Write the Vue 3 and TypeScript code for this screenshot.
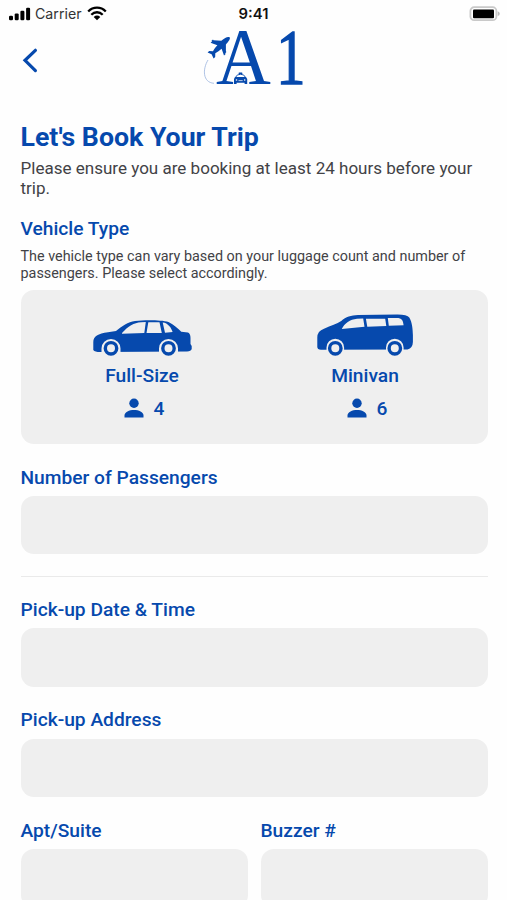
<script setup lang="ts">
interface Vehicle {
  id: 'sedan' | 'minivan'
  name: string
  seats: number
}

const vehicles: Vehicle[] = [
  { id: 'sedan', name: 'Full-Size', seats: 4 },
  { id: 'minivan', name: 'Minivan', seats: 6 },
]
</script>

<template>
  <main class="screen">
    <header class="status">
      <div class="carrier">
        <svg class="signal" width="22" height="14" viewBox="0 0 22 14">
          <rect x="0" y="8.8" width="4" height="4.4" rx="1.2" />
          <rect x="5.7" y="6.4" width="4" height="6.8" rx="1.2" />
          <rect x="11.4" y="3.8" width="4" height="9.4" rx="1.2" />
          <rect x="17.1" y="0.8" width="4" height="12.4" rx="1.2" />
        </svg>
        <span>Carrier</span>
        <svg class="wifi" width="20" height="15" viewBox="0 0 20 15">
          <path d="M1.2 5.5C6.2.4 13.8.4 18.8 5.5" />
          <path d="M4.3 8.7C7.6 5.4 12.4 5.4 15.7 8.7" />
          <path class="solid" d="M6.7 10.9Q10 8.2 13.3 10.9L10 14.3Z" />
        </svg>
      </div>
      <div class="time">9:41</div>
      <svg class="battery" width="32" height="16" viewBox="0 0 32 16">
        <rect x="1.400" y="1.200" width="26" height="13" rx="3.800" fill="#fff" stroke="#c9c9c9" stroke-width="1.8" />
        <rect x="4" y="3.600" width="21" height="8.600" rx="1" fill="#000" />
        <path d="M28.7 5.3Q30.8 6 30.8 7.7T28.7 10.1Z" fill="#bbb" />
      </svg>
    </header>

    <nav class="nav">
      <button class="back" aria-label="Back">
        <svg width="16" height="25" viewBox="0 0 16 25">
          <path d="M13.400 2.300 3 12.300 13.400 22.600" />
        </svg>
      </button>
      <svg class="logo" width="110" height="62" viewBox="200 27 110 62" role="img" aria-label="A1">
        <path d="M209 60C203.500 69 203.500 82.500 215 83.300" fill="none" stroke="#9bb4de" stroke-width="0.8" />
        <text transform="translate(216.900 84) scale(.95 1)" class="mark">A</text>
        <text transform="translate(277.300 82.800) scale(.73 .98)" class="mark digit">1</text>
        <path d="M230.600 37.300C229 36.200 226 37.500 222.300 40.700L214.500 40.200 214 39.500 212.500 40.800 213 41.400 211.600 42.700 218.400 45.300C216.400 47.300 215 49.200 214 51.200L210.200 51 208.600 52.400 212.600 54.200 214.600 58.500 216.200 57 216.300 53.300C218.500 52 220.500 50.500 222.600 48.700L225 55.600 226.500 54.200 226.300 53.200 227.400 52.100 226.900 51.200 226.900 44.500C229.800 41.300 231.700 38.600 230.600 37.300Z" />
        <g>
          <path class="outline" d="M236.500 77.800C237.400 73.200 245.500 73.200 246.600 77.800" />
          <rect x="239.600" y="72.500" width="3.800" height="1.600" rx=".6" />
          <path d="M236 77H247L248.200 79V84H245.600V82.800H237.600V84H235V79Z" />
          <circle cx="237.500" cy="80" r=".8" fill="#fff" />
          <circle cx="245.700" cy="80" r=".8" fill="#fff" />
          <path d="M239.500 80.600H243.700" stroke="#fff" stroke-width=".7" />
        </g>
      </svg>
    </nav>

    <section class="content">
      <h1>Let's Book Your Trip</h1>
      <p class="lead">Please ensure you are booking at least 24 hours before your trip.</p>

      <h2>Vehicle Type</h2>
      <p class="hint">The vehicle type can vary based on your luggage count and number of passengers. Please select accordingly.</p>

      <div class="vehicles">
        <div v-for="v in vehicles" :key="v.id" class="vehicle">
          <svg v-if="v.id === 'sedan'" width="100" height="44" viewBox="92 313 100 44">
            <path d="M93.300 350V342C93.300 336.500 98 333.500 108 332.300L116 331C122 326.300 128 322 135 321 145 319.900 161 320 168.500 321.900 174 324.500 178 328.500 181.300 331.700L188 332.500Q190.500 333.500 190.500 338V344L191.700 346V349Q191 351.300 187 351.400L101 352Q95 352.200 93.300 350Z" />
            <path class="window" d="M122 333C128 326.500 134 322.700 141 322.300L145.800 322.100 144.300 333 122 333.800ZM148.300 322.200H159.500L161.800 332.900H146.500ZM162.700 322.500C168 322.900 171.500 328 172.600 332L165 332.800Z" />
            <path class="arch" d="M101.500 352V348.500A9.500 9.500 0 0 1 120.500 348.500V352ZM159 352V348.500A9.500 9.500 0 0 1 178 348.500V352Z" />
            <circle class="wheel" cx="111" cy="348.300" r="5.700" />
            <circle class="wheel" cx="168.500" cy="348.300" r="5.700" />
          </svg>
          <svg v-else width="100" height="44" viewBox="315 313 100 44">
            <path d="M317.300 347V337.500Q317.300 331 324 328.700C331 325.700 337 323.800 341.200 321 346 317 351 315.400 358 315.100L397 314.600Q407 314.500 409.300 317.500C412.300 322.500 412.700 329 412.900 335V342Q412.800 348 407.500 349.400L321 349.800Q317.300 349.500 317.300 347Z" />
            <path class="window" d="M341.800 329C344.500 323.300 350 319.300 357 318.700L363.200 318.400 364.500 326.800ZM365.900 318.700H385.200L386.300 326 367.300 326.700ZM387.800 318H398.500Q403.200 318.500 403.600 325.300L388.800 325.800Z" />
            <path class="arch" d="M326.500 350V347.500A8.800 8.800 0 0 1 344.100 347.500V350ZM386 350V347.500A8.800 8.800 0 0 1 403.600 347.500V350Z" />
            <circle class="wheel" cx="335.300" cy="348.300" r="5.700" />
            <circle class="wheel" cx="394.800" cy="348.300" r="5.700" />
          </svg>
          <span class="name">{{ v.name }}</span>
          <span class="seats">
            <svg width="20" height="22" viewBox="0 0 20 22">
              <ellipse cx="10" cy="5.300" rx="4.700" ry="4.700" />
              <path d="M.5 19.500V17.500C.5 10 19.500 10 19.500 17.500V19.500Z" />
            </svg>
            {{ v.seats }}
          </span>
        </div>
      </div>

      <label class="field">Number of Passengers<input type="text" /></label>
      <hr />
      <label class="field">Pick-up Date &amp; Time<input type="text" /></label>
      <label class="field">Pick-up Address<input type="text" /></label>
      <div class="pair">
        <label class="field">Apt/Suite<input type="text" /></label>
        <label class="field">Buzzer #<input type="text" /></label>
      </div>
    </section>
  </main>
</template>

<style>
body {
  background: #fff;
}
</style>

<style scoped>
.screen {
  height: 900px;
  overflow: hidden;
  background: #fefefe;
  font-family: Roboto, "Liberation Sans", sans-serif;
  color: #0649ad;
}
.status {
  display: grid;
  grid-template-columns: 1fr auto 1fr;
  align-items: center;
  height: 27px;
  padding: 0 6px 0 9px;
  box-sizing: border-box;
  font-family: Inter, "Liberation Sans", sans-serif;
  font-size: 14.200px;
  color: #111;
}
.carrier {
  display: flex;
  align-items: center;
  color: #333;
}
.signal {
  margin-right: 4px;
  fill: #000;
}
.wifi {
  margin-left: 5px;
  fill: none;
  stroke: #000;
  stroke-width: 2.300;
}
.wifi .solid {
  fill: #000;
  stroke: none;
}
.time {
  padding-top: 1px;
  font-size: 14.800px;
  line-height: 18px;
  font-weight: 600;
  margin-left: -3px;
}
.battery {
  justify-self: end;
}
.nav {
  display: grid;
  grid-template-columns: 1fr auto 1fr;
  height: 94px;
  padding: 0 20px;
  box-sizing: border-box;
}
.back {
  justify-self: start;
  align-self: start;
  margin-top: 21px;
  padding: 0 0 0 2px;
  border: 0;
  background: none;
}
.back svg {
  display: block;
  fill: none;
  stroke: #0649ad;
  stroke-width: 3.200;
  stroke-linecap: round;
}
.logo {
  overflow: visible;
  fill: #0649ad;
}
.mark {
  font-family: "Liberation Serif", serif;
  font-size: 80px;
}
.digit {
  stroke: #0649ad;
  stroke-width: 1.500;
}
.outline {
  fill: none;
  stroke: #0649ad;
  stroke-width: 1;
}
.content {
  padding: 0 19.500px 0 20.500px;
}
h1,
h2,
p {
  margin: 0;
}
h1 {
  font-size: 26.700px;
  line-height: 32px;
  font-weight: 700;
}
.lead {
  margin-top: 6px;
  font-size: 17.040px;
  line-height: 19.500px;
  color: #424246;
}
h2,
.field {
  font-size: 19.200px;
  line-height: 24px;
  font-weight: 500;
}
h2 {
  margin-top: 19px;
}
.hint {
  margin-top: 7px;
  font-size: 14.380px;
  line-height: 17px;
  color: #424246;
}
.vehicles {
  display: grid;
  grid-template-columns: 1fr 1fr;
  height: 154px;
  margin: 8px 0 21.500px;
  padding: 23px 11px 0 10px;
  box-sizing: border-box;
  border-radius: 13px;
  background: #efefef;
}
.vehicle {
  display: flex;
  flex-direction: column;
  align-items: center;
  fill: #0649ad;
  font-size: 19.200px;
  font-weight: 500;
}
.window,
.arch {
  fill: #efefef;
}
.wheel {
  fill: #efefef;
  stroke: #0649ad;
  stroke-width: 3.400;
}
.name {
  margin-top: 7px;
  line-height: 24px;
}
.seats {
  display: flex;
  align-items: center;
  gap: 10px;
  margin: 9px 0 0 4px;
  line-height: 24px;
}
.field {
  display: block;
  margin-bottom: 21.700px;
}
.field input {
  display: block;
  width: 100%;
  height: 58.500px;
  margin-top: 6.300px;
  padding: 0 16px;
  box-sizing: border-box;
  border: 0;
  border-radius: 13px;
  outline: none;
  background: #efefef;
}
hr {
  height: 1px;
  margin: 0 0 21px;
  border: 0;
  background: #eaeaea;
}
.pair {
  display: grid;
  grid-template-columns: 1fr 1fr;
  gap: 13px;
}
</style>
